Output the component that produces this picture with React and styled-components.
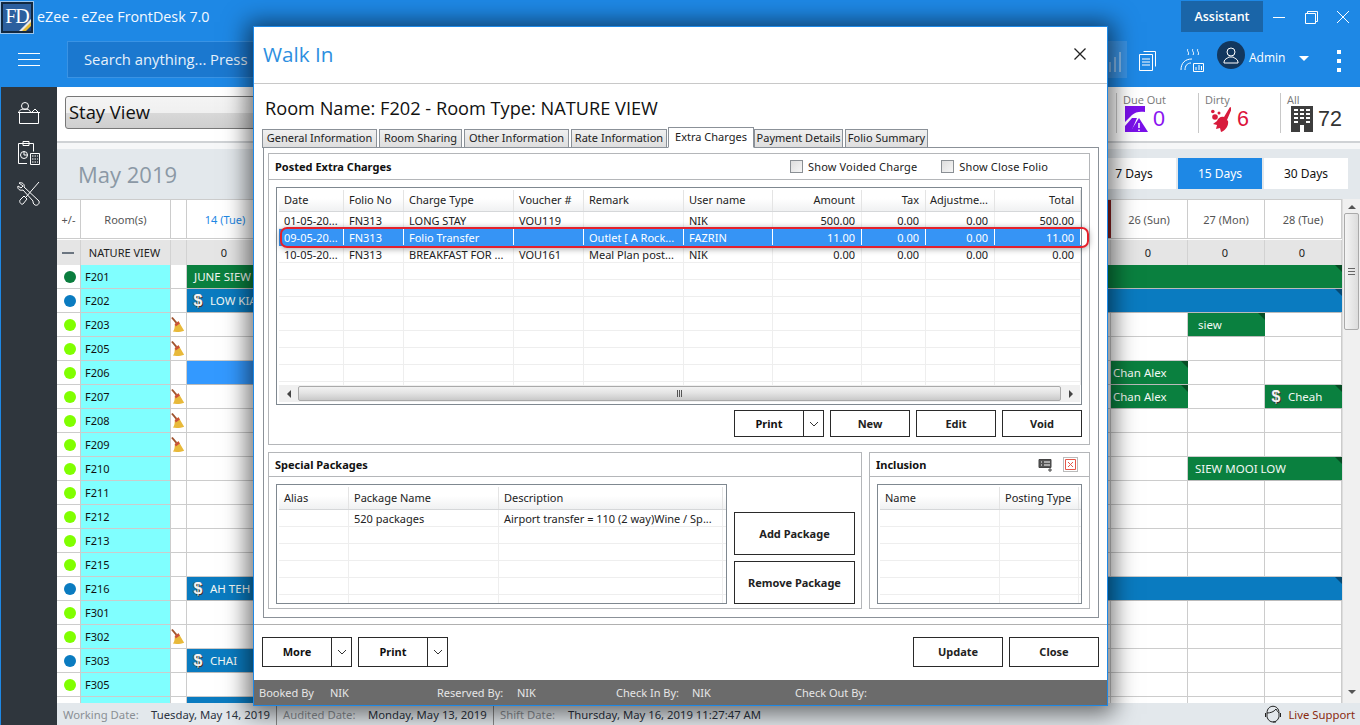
import React from 'react';
import styled, { createGlobalStyle } from 'styled-components';

const Global = createGlobalStyle`
  html, body { margin: 0; padding: 0; width: 1360px; height: 725px; overflow: hidden; background: #fff; }
  body { font-family: "Noto Sans", "Open Sans", sans-serif; font-size: 11px; color: #222; }
  * { box-sizing: border-box; }
`;

const Page = styled.div`
  position: relative; width: 1360px; height: 725px; overflow: hidden;
  display: flex; flex-direction: column;
`;
const TopBand = styled.header`background: #1e88e5; height: 87px; display: flex; flex-direction: column; flex: none;`;
const TitleBar = styled.div`height: 35px; display: flex; align-items: flex-start; color: #fff;`;
const Logo = styled.div`
  position: relative; width: 32px; height: 31px; margin: 2px 0 0 1px; overflow: hidden;
  background: #2c5f9e; border: 2px solid #12283f; outline: 1px solid #9cc4ea;
  font-family: "Liberation Serif", serif; font-size: 20px; line-height: 24px; color: #fff; text-align: center; letter-spacing: -1px;
`;
const LogoCorner = styled.svg`position: absolute; right: 0; bottom: 0;`;
const AppTitle = styled.div`font-family: "Open Sans", sans-serif; font-size: 14.3px; line-height: 34px; margin-left: 4px; flex: 1; color: #f4f9ff;`;
const Assistant = styled.div`
  width: 82px; height: 31px; margin-top: 1px; background: #1a65a8; color: #fff; font-family: "Open Sans", sans-serif;
  font-size: 12.5px; font-weight: 600; display: flex; align-items: center; justify-content: center;
`;
const WinBtn = styled.div`width: 32px; height: 32px; display: flex; align-items: center; justify-content: center;`;
const WinGroup = styled.div`display: flex; padding: 1px 1px 0 0; width: 97px; justify-content: flex-end;`;

const ToolBar = styled.div`height: 52px; display: flex; align-items: flex-start; padding-top: 6px; color: #fff;`;
const Burger = styled.div`width: 67px; height: 37px; display: flex; flex-direction: column; justify-content: center; gap: 5px; padding-left: 18px;
  i { display: block; width: 22px; height: 1px; background: #fff; }`;
const Search = styled.div`
  width: 1060px; height: 37px; background: #1b78cf; border: 1px solid #3a93e4; padding-left: 16px;
  font-family: "Open Sans", sans-serif; font-size: 14.8px; line-height: 35px; color: #e6f1fb;
  display: flex; justify-content: space-between;
`;
const SearchChart = styled.div`width: 19px; height: 35px; background: #3a93e4; display: flex; align-items: center;`;
const ToolIcon = styled.div`width: ${p => p.$w}px; display: flex; justify-content: center; align-items: center; height: 37px; flex: none;`;
const Avatar = styled.div`width: 28px; height: 28px; border-radius: 50%; background: #12375e; display: flex; align-items: center; justify-content: center; flex: none;`;
const AdminName = styled.div`font-family: "Open Sans", sans-serif; font-size: 12px; margin-left: 4px; width: 46px; line-height: 33px; height: 37px;`;
const Caret = styled.div`width: 0; height: 0; border-left: 5px solid transparent; border-right: 5px solid transparent; border-top: 5px solid #fff; margin: 15px 0 0 4px;`;
const Dots = styled.div`display: flex; flex-direction: column; gap: 5px; margin: 9px 0 0 28px; i { width: 4px; height: 4px; background: #fff; display: block; }`;

const Body = styled.div`flex: 1; display: flex; min-height: 0;`;
const Side = styled.nav`
  width: 57px; flex: none; background: #2f363d; border-left: 1px solid #1e88e5; display: flex; flex-direction: column;
  align-items: center; padding-top: 14px; gap: 15px;
`;
const Content = styled.main`flex: 1; display: flex; flex-direction: column; min-width: 0;`;
const SubBar = styled.div`height: 56px; flex: none; display: flex; justify-content: space-between; align-items: flex-start; background: #fff; border-bottom: 2px solid #cfd2d5;`;
const ViewSelect = styled.div`
  width: 400px; height: 33px; margin: 9px 0 0 8px; border: 1px solid #777; border-radius: 3px;
  background: linear-gradient(#f4f4f4, #f0f0f0 50%, #d8d8d8 52%, #cfcfcf);
  font-family: "Open Sans", sans-serif; font-size: 18.4px; line-height: 30px; padding-left: 3px; color: #111;
`;
const Stats = styled.div`display: flex; padding-top: 6px;`;
const Stat = styled.div`width: 82px; height: 40px; border-left: 1px solid #c8c8c8; padding-left: 6px; position: relative; &:last-child{width:80px}`;
const StatLabel = styled.div`font-family: "Open Sans", sans-serif; font-size: 11px; line-height: 14px; color: #777;`;
const StatValue = styled.div`display: flex; align-items: center; gap: ${p => p.$gap || 4}px; font-family: "Liberation Sans", sans-serif; font-size: 21.5px; line-height: 26px; color: ${p => p.$c}; padding-left: ${p => p.$pad || 2}px; margin-top: -1px;`;

const Gap = styled.div`height: 6px; flex: none; background: #f6f7f8;`;
const MonthBand = styled.div`height: 50px; flex: none; background: #e3e8ec; display: flex; justify-content: space-between; padding: 9px 12px 0 21px;`;
const Month = styled.div`font-family: "Open Sans", sans-serif; font-size: 22px; line-height: 32px; color: #8b98a5;`;
const RangeTabs = styled.div`display: flex; gap: 2px;`;
const RangeTab = styled.div`
  width: 84px; height: 31px; background: ${p => p.$on ? '#1e88e5' : '#fff'}; color: ${p => p.$on ? '#fff' : '#111'};
  font-size: 12px; display: flex; align-items: center; justify-content: center;
`;

const GridWrap = styled.div`flex: 1; display: flex; min-height: 0;`;
const Grid = styled.div`width: 1285px; overflow: hidden; flex: none; background: #fff;`;
const cols = '24px 90px 16px repeat(15, 77px)';
const HeadRow = styled.div`display: grid; grid-template-columns: ${cols}; height: 40px; border-bottom: 1px solid #ccc; border-top: 1px solid #ccc; background: #fff;`;
const HeadCell = styled.div`
  border-right: ${p => p.$today ? '3px solid #8a2020' : '1px solid #ccc'}; display: flex; align-items: center; justify-content: center;
  font-size: 11px; color: ${p => p.$blue ? '#1e88e5' : '#555'};
`;
const TypeRow = styled.div`display: grid; grid-template-columns: ${cols}; height: 26px; background: #e5e5e5; border-top: 1px solid #fff;`;
const TypeCell = styled.div`border-right: 1px solid #d2d2d2; display: flex; align-items: center; justify-content: center; font-size: 11px; color: #222; padding-right: 2px; white-space: nowrap;`;
const Minus = styled.i`width: 12px; height: 2px; background: #6b7580; display: block;`;
const Row = styled.div`display: grid; grid-template-columns: ${cols}; height: 24px;`;
const Cell = styled.div`border-right: 1px solid #ccc; border-bottom: 1px solid #ccc; display: flex; align-items: center; justify-content: center; min-width: 0;`;
const DotCell = styled(Cell)`padding-left: 2px;`;
const RoomCell = styled(Cell)`background: #80ffff; justify-content: flex-start; padding-left: 4px; font-size: 11px; color: #111;`;
const Dot = styled.i`width: 12px; height: 12px; border-radius: 50%; background: ${p => p.$c}; display: block;`;
const Booking = styled.div`
  position: relative; grid-column: span ${p => p.$span}; background: ${p => p.$c}; border-bottom: 1px solid #bbb; color: #f2f8f4;
  display: flex; align-items: center; gap: 5px; padding-left: ${p => p.$pad}px; font-size: 11.5px; white-space: nowrap; overflow: hidden;
  &::after { content: ""; position: absolute; top: 0; right: 0; border-top: 7px solid rgba(0,0,0,.4); border-left: 7px solid transparent; }
`;
const Coin = styled.span`
  width: 14px; height: 16px; color: #f4f4f4; font: bold 16px/16px "Liberation Sans", sans-serif; text-align: center; flex: none;
  text-shadow: 1px 1px 0 #333, -1px 0 0 #555;
`;
const VScroll = styled.div`width: 18px; flex: none; background: #f0f0f0; display: flex; flex-direction: column; align-items: center; border-left: 1px solid #ddd;`;
const VThumb = styled.div`width: 15px; height: 117px; margin-top: 4px; background: linear-gradient(90deg,#f4f4f4,#dcdcdc); border: 1px solid #aaa; border-radius: 2px; display: flex; flex-direction: column; gap: 2px; align-items: center; justify-content: center; i{width:7px;height:1px;background:#666;display:block}`;
const VArrow = styled.div`margin-top: ${p => p.$top || 0}px; width: 0; height: 0; border-left: 4px solid transparent; border-right: 4px solid transparent; ${p => p.$up ? 'border-bottom: 4px solid #555;' : 'border-top: 4px solid #555;'}`;

const StatusBar = styled.footer`height: 22px; flex: none; background: #e3e8ec; display: flex; align-items: center; font-size: 11.3px; padding-left: 6px; position: relative; z-index: 1;`;
const SLabel = styled.span`color: #8a8f94; width: ${p => p.$w}px; flex: none; white-space: nowrap;`;
const SValue = styled.span`color: #2b3340; width: ${p => p.$w}px; flex: none; white-space: nowrap;`;
const SDiv = styled.i`width: 1px; height: 22px; background: #888; margin-right: 6px; flex: none; display: block;`;
const Live = styled.div`margin-left: auto; display: flex; align-items: center; gap: 6px; color: #8a2a10; padding-right: 5px;`;

/* modal: a window lying over the page */
const Modal = styled.section`
  position: absolute; left: 253px; top: 26px; width: 855px; height: 680px; background: #fff; border: 1px solid #1e88e5;
  box-shadow: 0 2px 22px 6px rgba(0,0,0,.55); display: flex; flex-direction: column; z-index: 5;
`;
const ModalHead = styled.div`height: 57px; flex: none; display: flex; align-items: center; justify-content: space-between; padding: 0 20px 2px 9px; border-bottom: 1px solid #c8c8c8;`;
const ModalTitle = styled.div`font-family: "Open Sans", sans-serif; font-size: 20.7px; color: #2d8fe0;`;
const RoomName = styled.div`height: 43px; flex: none; font-family: "Open Sans", sans-serif; font-size: 18.2px; line-height: 24px; padding: 12px 0 0 11px; color: #111; white-space: nowrap;`;
const Tabs = styled.div`height: 21px; flex: none; margin-left: 8px; display: flex; align-items: flex-end; position: relative; z-index: 1; margin-bottom: -1px;`;
const Tab = styled.div`
  width: ${p => p.$w}px; flex: none; margin-right: ${p => p.$m ?? 2}px; height: ${p => p.$on ? 21 : 19}px;
  border: 1px solid #8b9198; border-bottom: ${p => p.$on ? '1px solid #fff' : '1px solid #8b9198'}; padding-bottom: 2px;
  background: ${p => p.$on ? '#fff' : 'linear-gradient(#f0f0f0,#dedede)'}; color: #222;
  display: flex; align-items: center; justify-content: center; font-size: 11px; white-space: nowrap; overflow: hidden;
`;
const TabPanel = styled.div`width: 836px; height: 471px; flex: none; margin-left: 9px; border: 1px solid #8b9198; padding: 5px 8px 0 4px; display: flex; flex-direction: column; gap: 7px;`;
const Group = styled.div`border: 1px solid #b4b6b9; display: flex; flex-direction: column; flex: none; width: ${p => p.$w ? p.$w + 'px' : 'auto'}; height: ${p => p.$h}px;`;
const GroupHead = styled.div`height: ${p => p.$h || 26}px; flex: none; border-bottom: 1px solid #b4b6b9; display: flex; align-items: center; justify-content: space-between; padding: 0 7px 0 6px;`;
const GroupTitle = styled.div`font-weight: 700; font-size: 11px; color: #111;`;
const Checks = styled.div`display: flex; align-items: center; padding-right: 34px;`;
const Check = styled.label`display: flex; align-items: center; gap: 5px; color: #222; margin-left: 24px; font-size: 11px; letter-spacing: .15px;`;
const Box = styled.i`width: 13px; height: 13px; border: 1px solid #8a8f94; background: linear-gradient(135deg,#ddd,#f6f6f6); display: block;`;
const Frame = styled.div`
  position: relative; margin: ${p => p.$m}; width: ${p => p.$w}px; height: ${p => p.$h}px; border: 1px solid #7f8890;
  padding: 2px 0 0 2px; display: flex; flex-direction: column; flex: none;
`;
const Lines = styled.div`flex: 1; overflow: hidden; min-height: 0;`;
const THead = styled.div`display: grid; grid-template-columns: ${p => p.$t}; height: ${p => p.$h || 22}px; background: linear-gradient(#fff 40%, #f0f1f2); border-bottom: 1px solid #d5d7d9;`;
const TH = styled.div`
  padding: 0 ${p => p.$r ? 6 : 5}px 2px 5px; display: flex; align-items: center; justify-content: ${p => p.$r ? 'flex-end' : 'flex-start'}; color: #222; font-size: 11px;
  border-right: 1px solid #e4e4e4; white-space: nowrap; overflow: hidden;
`;
const TRow = styled.div`display: grid; grid-template-columns: ${p => p.$t}; height: 17px; background: ${p => p.$sel ? '#3694f5' : '#fff'}; color: ${p => p.$sel ? '#fff' : '#222'}; border-bottom: 1px solid ${p => p.$sel ? '#3694f5' : '#eeeeee'};`;
const TD = styled.div`
  padding: 1px ${p => p.$r ? 6 : 5}px 0 5px; display: flex; align-items: center; justify-content: ${p => p.$r ? 'flex-end' : 'flex-start'}; font-size: 11px; line-height: 14px;
  border-right: 1px solid ${p => p.$sel ? '#fff' : '#eeeeee'}; white-space: nowrap; overflow: hidden;
`;
const Highlight = styled.div`
  position: absolute; left: 3px; top: 39px; width: 809px; height: 21px; border: 2px solid #e4202c; border-radius: 7px;
  box-shadow: 0 1px 6px rgba(0,0,0,.35); pointer-events: none;
`;
const HScroll = styled.div`height: 17px; flex: none; margin: 0 1px 2px 0; display: flex; align-items: center; background: #f0f0f0;`;
const HArrow = styled.div`width: 19px; display: flex; justify-content: center; flex: none;
  i { width: 0; height: 0; border-top: 4px solid transparent; border-bottom: 4px solid transparent; ${p => p.$left ? 'border-right: 4px solid #444;' : 'border-left: 4px solid #444;'} display: block; }`;
const HThumb = styled.div`flex: 1; height: 15px; border: 1px solid #aaa; border-radius: 2px; background: linear-gradient(#f2f2f2,#e4e4e4 45%,#c9c9c9); display: flex; align-items: center; justify-content: center; gap: 1px;
  i { width: 1px; height: 7px; background: #555; display: block; }`;
const BtnRow = styled.div`display: flex; justify-content: flex-end; gap: 6px; padding: 5px 7px 0 0; flex: none;`;
const Btn = styled.div`
  width: ${p => p.$w}px; height: ${p => p.$h || 27}px; border: 1px solid #2a2a2a; background: #fff; color: #222; font-weight: 700; font-size: 11px;
  display: flex; align-items: center; justify-content: center; flex: none; padding-bottom: ${p => p.$pb || 0}px;
`;
const Split = styled.div`display: flex; width: ${p => p.$w}px; height: ${p => p.$h}px; border: 1px solid #2a2a2a; flex: none; font-weight: 700; color: #111; font-size: 11px;`;
const SplitMain = styled.div`flex: 1; display: flex; align-items: center; justify-content: center; border-right: 1px solid #2a2a2a; padding-bottom: ${p => p.$pb || 0}px;`;
const SplitArrow = styled.div`width: 19px; display: flex; align-items: center; justify-content: center; flex: none;`;
const Pair = styled.div`display: flex; gap: 7px;`;
const SpecialBody = styled.div`display: flex; flex: 1;`;
const PkgBtns = styled.div`display: flex; flex-direction: column; justify-content: flex-end; gap: 6px; margin: 0 0 4px 7px;`;
const IncIcons = styled.div`display: flex; align-items: center; gap: 10px; padding-right: 4px;`;
const XBox = styled.div`width: 15px; height: 15px; border: 1px solid #bbb; padding: 1px; display: flex; align-items: center; justify-content: center;`;
const Footer = styled.div`flex: 1; display: flex; justify-content: space-between; padding: 12px 8px 0 8px; border-top: 1px solid #b0b0b0; margin-top: 6px;`;
const FootGroup = styled.div`display: flex; gap: 6px;`;
const Info = styled.div`height: 25px; flex: none; background: #6b6b6b; color: #e6e6e6; display: flex; align-items: center; padding-left: 5px; font-size: 11px;`;
const InfoItem = styled.span`width: ${p => p.$w}px; flex: none; white-space: nowrap;`;

const Chevron = () => <svg width="10" height="6" viewBox="0 0 10 6"><path d="M1 1l4 4 4-4" fill="none" stroke="#333" /></svg>;

const Broom = () => (
  <svg width="16" height="18" viewBox="0 0 16 18">
    <path d="M1 1l5 6" stroke="#a0522d" strokeWidth="2" />
    <path d="M4 8l4-3 6 10c-3 1.500-9 2-12 1 2-2 2-5 2-8z" fill="#e8b93a" />
    <path d="M4 8l4-3 1.500 2.500-4.500 3z" fill="#c9503a" />
  </svg>
);

const rooms = ['F201','F202','F203','F205','F206','F207','F208','F209','F210','F211','F212','F213','F215','F216','F301','F302','F303','F305',''];
const dotColor = { F201: '#0a7d3e', F202: '#0a7bc0', F216: '#0a7bc0', F303: '#0a7bc0' };
const brooms = new Set(['F203','F205','F207','F208','F209','F302']);
const G = '#0a803f', B = '#0a7bc0', L = '#3399ff';
const bookings = {
  F201: [{ at: 0, span: 15, c: G, t: 'JUNE SIEW', pad: 7 }],
  F202: [{ at: 0, span: 15, c: B, t: 'LOW KIAN', coin: true, pad: 4 }],
  F203: [{ at: 13, span: 1, c: G, t: 'siew', pad: 10 }],
  F206: [{ at: 0, span: 3, c: L, t: '', pad: 6 }, { at: 12, span: 1, c: G, t: 'Chan Alex', pad: 2 }],
  F207: [{ at: 12, span: 1, c: G, t: 'Chan Alex', pad: 2 }, { at: 14, span: 1, c: G, t: 'Cheah', coin: true, pad: 4 }],
  F210: [{ at: 13, span: 2, c: G, t: 'SIEW MOOI LOW', pad: 7 }],
  F216: [{ at: 0, span: 15, c: B, t: 'AH TEH', coin: true, pad: 4 }],
  F303: [{ at: 0, span: 3, c: B, t: 'CHAI', coin: true, pad: 4 }],
  '': [{ at: 0, span: 3, c: B, t: '', pad: 6 }],
};
const dayNames = ['Tue','Wed','Thu','Fri','Sat','Sun','Mon'];
const days = Array.from({ length: 15 }, (_, i) => `${14 + i} (${dayNames[i % 7]})`);

const RoomRow = ({ room }) => {
  const list = bookings[room] || [];
  const cells = [];
  for (let i = 0; i < 15; i++) {
    const b = list.find(x => x.at === i);
    if (b) {
      cells.push(
        <Booking key={i} $span={b.span} $c={b.c} $pad={b.pad}>
          {b.coin && <Coin>$</Coin>}{b.t}
        </Booking>
      );
      i += b.span - 1;
    } else cells.push(<Cell key={i} />);
  }
  return (
    <Row>
      <DotCell>{room && <Dot $c={dotColor[room] || '#80ff00'} />}</DotCell>
      <RoomCell>{room}</RoomCell>
      <Cell>{brooms.has(room) && <Broom />}</Cell>
      {cells}
    </Row>
  );
};

const chargeCols = '65px 60px 110px 70px 100px 89px 89px 64px 69px 86px';
const chargeHead = ['Date','Folio No','Charge Type','Voucher #','Remark','User name','Amount','Tax','Adjustme...','Total'];
const chargeRows = [
  ['01-05-20...','FN313','LONG STAY','VOU119','','NIK','500.00','0.00','0.00','500.00'],
  ['09-05-20...','FN313','Folio Transfer','','Outlet [ A Rock...','FAZRIN','11.00','0.00','0.00','11.00'],
  ['10-05-20...','FN313','BREAKFAST FOR ...','VOU161','Meal Plan post...','NIK','0.00','0.00','0.00','0.00'],
  ...Array.from({ length: 8 }, () => Array(10).fill('')),
];
const pkgCols = '70px 150px 224px';
const incCols = '120px 79px';

const App = () => (
  <Page>
    <Global />
    <TopBand>
      <TitleBar>
        <Logo>FD
          <LogoCorner width="12" height="12" viewBox="0 0 12 12"><path d="M12 0v12H0z" fill="#e8e8e8" /><path d="M12 3v9H3z" fill="#e6b82e" /><path d="M12 7v5H7z" fill="#1a3d7a" /></LogoCorner>
        </Logo>
        <AppTitle>eZee - eZee FrontDesk 7.0</AppTitle>
        <Assistant>Assistant</Assistant>
        <WinGroup>
          <WinBtn><svg width="14" height="14"><path d="M1 7.500h12" stroke="#fff" /></svg></WinBtn>
          <WinBtn><svg width="15" height="15"><path d="M1.500 3.500h10v10h-10zM3.500 3.500v-2h10v10h-2" fill="none" stroke="#fff" /></svg></WinBtn>
          <WinBtn><svg width="14" height="14"><path d="M1 1l12 12M13 1L1 13" stroke="#fff" /></svg></WinBtn>
        </WinGroup>
      </TitleBar>
      <ToolBar>
        <Burger><i /><i /><i /></Burger>
        <Search>
          Search anything... Press
          <SearchChart>
            <svg width="18" height="24" viewBox="0 0 18 24" fill="none" stroke="#9cc6ee" strokeWidth="1.500"><path d="M3 24V14M8 24V9M13 24V4" /></svg>
          </SearchChart>
        </Search>
        <ToolIcon $w={40}>
          <svg width="20" height="22" viewBox="0 0 20 22" fill="none" stroke="#fff"><path d="M6.500 2.500h12v15M2.500 5.500h13v16h-13zM5 10h8M5 13h8M5 16h8" /></svg>
        </ToolIcon>
        <ToolIcon $w={50}>
          <svg width="24" height="24" viewBox="0 0 24 24" fill="none" stroke="#fff"><path d="M8 1c-2 2 2 3 0 6M13 1c-2 2 2 3 0 6M18 1c-2 2 2 3 0 6M1 22c0-7 4-11 11-11M5 22c0-4 2-7 6-7" /><path d="M13.500 15.500h10v8h-10zM16 22v-3M19 22v-5M21.500 22v-4" /></svg>
        </ToolIcon>
        <Avatar>
          <svg width="16" height="18" viewBox="0 0 16 18" fill="none" stroke="#fff"><circle cx="8" cy="6" r="4" /><path d="M1 16c0-3 4-4 5-5h4c1 1 5 2 5 5v1H1z" /></svg>
        </Avatar>
        <AdminName>Admin</AdminName>
        <Caret />
        <Dots><i /><i /><i /></Dots>
      </ToolBar>
    </TopBand>
    <Body>
      <Side>
        <svg width="24" height="24" viewBox="0 0 24 24" fill="none" stroke="#fff"><circle cx="8" cy="5" r="3.500" /><path d="M2 11c0-2 3-3 6-3s5 1 5.500 3M15 11l3-3 3 3" /><path d="M1 11.500h22M2.500 11.500v11h19v-11" /></svg>
        <svg width="24" height="26" viewBox="0 0 24 26" fill="none" stroke="#fff"><path d="M1.500 3.500h15v8M10 23.500H1.500v-20M6 1.500h6v4H6z" /><circle cx="7" cy="15" r="3.500" /><path d="M7 15v-3.500M7 15h3.500" /><path d="M13.500 13.500h9v11h-9z" /><path d="M15 16h6M15 19h6M15 22h6" strokeDasharray="1.500 1" /></svg>
        <svg width="24" height="26" viewBox="0 0 24 26" fill="none" stroke="#fff"><path d="M22 1L9 16M3 19l4-4 3 3-4 5c-2 1-4-2-3-4zM2 2c3-1 6 1 5 4l15 14c1 3-2 5-4 4-2-1-2-3-2-4L6 9C3 10 0 8 1 5l3 2 2-2z" /></svg>
      </Side>
      <Content>
        <SubBar>
          <ViewSelect>Stay View</ViewSelect>
          <Stats>
            <Stat>
              <StatLabel>Due Out</StatLabel>
              <StatValue $c="#8a14f0">
                <svg width="24" height="26" viewBox="0 0 24 26" fill="#7a10ea">
                  <path d="M0 0h20v6c-5-1-10 0-13 3L0 16z" />
                  <path d="M0 20l7-8h5L6 26H0z" />
                  <path d="M14 12l9 14H5z" />
                  <path d="M14 17v5M14 23.500v1.500" stroke="#fff" strokeWidth="1.500" />
                </svg>0
              </StatValue>
            </Stat>
            <Stat>
              <StatLabel>Dirty</StatLabel>
              <StatValue $c="#dc143c" $pad={6} $gap={6}>
                <svg width="20" height="25" viewBox="0 0 20 25" fill="#d81b3c"><circle cx="4" cy="10" r="2.800" /><circle cx="1.800" cy="4.500" r="1.800" /><circle cx="8" cy="6" r="1.500" /><path d="M19 0l-6 10c-3-1-6 1-7 4l-4 3 4 1-1 4 4-1 1 4c4-1 8-6 7-11l-1-1 5-12z" /></svg>6
              </StatValue>
            </Stat>
            <Stat>
              <StatLabel>All</StatLabel>
              <StatValue $c="#333" $pad={4} $gap={5}>
                <svg width="22" height="26" viewBox="0 0 22 26"><path d="M0 0h22v26H0z" fill="#3d3d3d" /><path d="M3 4h4M9 4h4M15 4h4M3 8h4M9 8h4M15 8h4M3 12h4M9 12h4M15 12h4M3 16h4M15 16h4" stroke="#fff" strokeWidth="2" /><path d="M9 19h4v7H9z" fill="#fff" /></svg>72
              </StatValue>
            </Stat>
          </Stats>
        </SubBar>
        <Gap />
        <MonthBand>
          <Month>May 2019</Month>
          <RangeTabs>
            <RangeTab>7 Days</RangeTab>
            <RangeTab $on>15 Days</RangeTab>
            <RangeTab>30 Days</RangeTab>
          </RangeTabs>
        </MonthBand>
        <GridWrap>
          <Grid>
            <HeadRow>
              <HeadCell>+/-</HeadCell>
              <HeadCell>Room(s)</HeadCell>
              <HeadCell />
              {days.map((d, i) => <HeadCell key={d} $blue={i === 0} $today={i === 11}>{d}</HeadCell>)}
            </HeadRow>
            <TypeRow>
              <TypeCell><Minus /></TypeCell>
              <TypeCell>NATURE VIEW</TypeCell>
              <TypeCell />
              {days.map(d => <TypeCell key={d}>0</TypeCell>)}
            </TypeRow>
            {rooms.map(r => <RoomRow key={r || 'next'} room={r} />)}
          </Grid>
          <VScroll>
            <VArrow $up $top={6} />
            <VThumb><i /><i /><i /></VThumb>
            <VArrow $top={360} />
          </VScroll>
        </GridWrap>
        <StatusBar>
          <SLabel $w={88}>Working Date:</SLabel>
          <SValue $w={125}>Tuesday, May 14, 2019</SValue>
          <SDiv />
          <SLabel $w={85}>Audited Date:</SLabel>
          <SValue $w={125}>Monday, May 13, 2019</SValue>
          <SDiv />
          <SLabel $w={68}>Shift Date:</SLabel>
          <SValue $w={240}>Thursday, May 16, 2019 11:27:47 AM</SValue>
          <Live>
            <svg width="18" height="20" viewBox="0 0 18 20" fill="none" stroke="#222"><path d="M3 9c0-9 12-9 12 0v4c-1 3-3 5-6 5s-5-2-6-5zM3 9c3 0 7-1 9-4 1 2 2 3 3 4M1.500 9v4M16.500 9v4M9 18h3" /></svg>
            Live Support
          </Live>
        </StatusBar>
      </Content>
    </Body>

    <Modal>
      <ModalHead>
        <ModalTitle>Walk In</ModalTitle>
        <svg width="14" height="14"><path d="M1.500 1.500l11 11M12.500 1.500l-11 11" stroke="#222" strokeWidth="1.300" /></svg>
      </ModalHead>
      <RoomName>Room Name: F202 - Room Type: NATURE VIEW</RoomName>
      <Tabs>
        <Tab $w={115}>General Information</Tab>
        <Tab $w={83}>Room Sharing</Tab>
        <Tab $w={105}>Other Information</Tab>
        <Tab $w={96} $m={1}>Rate Information</Tab>
        <Tab $w={86} $on $m={0}>Extra Charges</Tab>
        <Tab $w={89}>Payment Details</Tab>
        <Tab $w={83}>Folio Summary</Tab>
      </Tabs>
      <TabPanel>
        <Group $h={292}>
          <GroupHead>
            <GroupTitle>Posted Extra Charges</GroupTitle>
            <Checks>
              <Check><Box />Show Voided Charge</Check>
              <Check><Box />Show Close Folio</Check>
            </Checks>
          </GroupHead>
          <Frame $w={806} $h={218} $m="7px 0 0 7px">
            <THead $t={chargeCols}>
              {chargeHead.map((h, i) => <TH key={h} $r={i >= 6}>{h}</TH>)}
            </THead>
            <Lines>
              {chargeRows.map((r, i) => (
                <TRow key={i} $t={chargeCols} $sel={i === 1}>
                  {r.map((c, j) => <TD key={j} $r={j >= 6} $sel={i === 1}>{c}</TD>)}
                </TRow>
              ))}
            </Lines>
            <HScroll>
              <HArrow $left><i /></HArrow>
              <HThumb><i /><i /><i /></HThumb>
              <HArrow><i /></HArrow>
            </HScroll>
            <Highlight />
          </Frame>
          <BtnRow>
            <Split $w={90} $h={27}><SplitMain>Print</SplitMain><SplitArrow><Chevron /></SplitArrow></Split>
            <Btn $w={80}>New</Btn>
            <Btn $w={80}>Edit</Btn>
            <Btn $w={80}>Void</Btn>
          </BtnRow>
        </Group>
        <Pair>
          <Group $w={594} $h={157}>
            <GroupHead $h={24}><GroupTitle>Special Packages</GroupTitle></GroupHead>
            <SpecialBody>
              <Frame $w={451} $h={120} $m="7px 0 0 7px">
                <THead $t={pkgCols} $h={23}>
                  <TH>Alias</TH><TH>Package Name</TH><TH>Description</TH>
                </THead>
                <Lines>
                  <TRow $t={pkgCols}><TD /><TD>520 packages</TD><TD>Airport transfer = 110 (2 way)Wine / Sp...</TD></TRow>
                  {[0, 1, 2, 3, 4].map(i => <TRow key={i} $t={pkgCols}><TD /><TD /><TD /></TRow>)}
                </Lines>
              </Frame>
              <PkgBtns>
                <Btn $w={121} $h={43}>Add Package</Btn>
                <Btn $w={121} $h={43}>Remove Package</Btn>
              </PkgBtns>
            </SpecialBody>
          </Group>
          <Group $w={221} $h={157}>
            <GroupHead $h={24}>
              <GroupTitle>Inclusion</GroupTitle>
              <IncIcons>
                <svg width="15" height="14" viewBox="0 0 15 14" fill="none" stroke="#444"><path d="M1 1.500h12v8H1z" fill="#555" /><path d="M3 4h1M3 7h1M6 4h6M6 7h6" stroke="#fff" /><path d="M12 10v4M10 12h4" /></svg>
                <XBox>
                  <svg width="11" height="11"><path d="M.5.500h10v10H.5z" fill="#fff" stroke="#e5574a" /><path d="M3 3l5 5M8 3l-5 5" stroke="#e5574a" /></svg>
                </XBox>
              </IncIcons>
            </GroupHead>
            <Frame $w={205} $h={120} $m="7px 0 0 7px">
              <THead $t={incCols} $h={23}><TH>Name</TH><TH>Posting Type</TH></THead>
              <Lines>
                {[0, 1, 2, 3, 4, 5].map(i => <TRow key={i} $t={incCols}><TD /><TD /></TRow>)}
              </Lines>
            </Frame>
          </Group>
        </Pair>
      </TabPanel>
      <Footer>
        <FootGroup>
          <Split $w={90} $h={30}><SplitMain $pb={2}>More</SplitMain><SplitArrow><Chevron /></SplitArrow></Split>
          <Split $w={90} $h={30}><SplitMain $pb={2}>Print</SplitMain><SplitArrow><Chevron /></SplitArrow></Split>
        </FootGroup>
        <FootGroup>
          <Btn $w={90} $h={30} $pb={2}>Update</Btn>
          <Btn $w={90} $h={30} $pb={2}>Close</Btn>
        </FootGroup>
      </Footer>
      <Info>
        <InfoItem $w={71}>Booked By</InfoItem>
        <InfoItem $w={107}>NIK</InfoItem>
        <InfoItem $w={80}>Reserved By:</InfoItem>
        <InfoItem $w={99}>NIK</InfoItem>
        <InfoItem $w={76}>Check In By:</InfoItem>
        <InfoItem $w={103}>NIK</InfoItem>
        <InfoItem $w={90}>Check Out By:</InfoItem>
      </Info>
    </Modal>
  </Page>
);

export default App;
